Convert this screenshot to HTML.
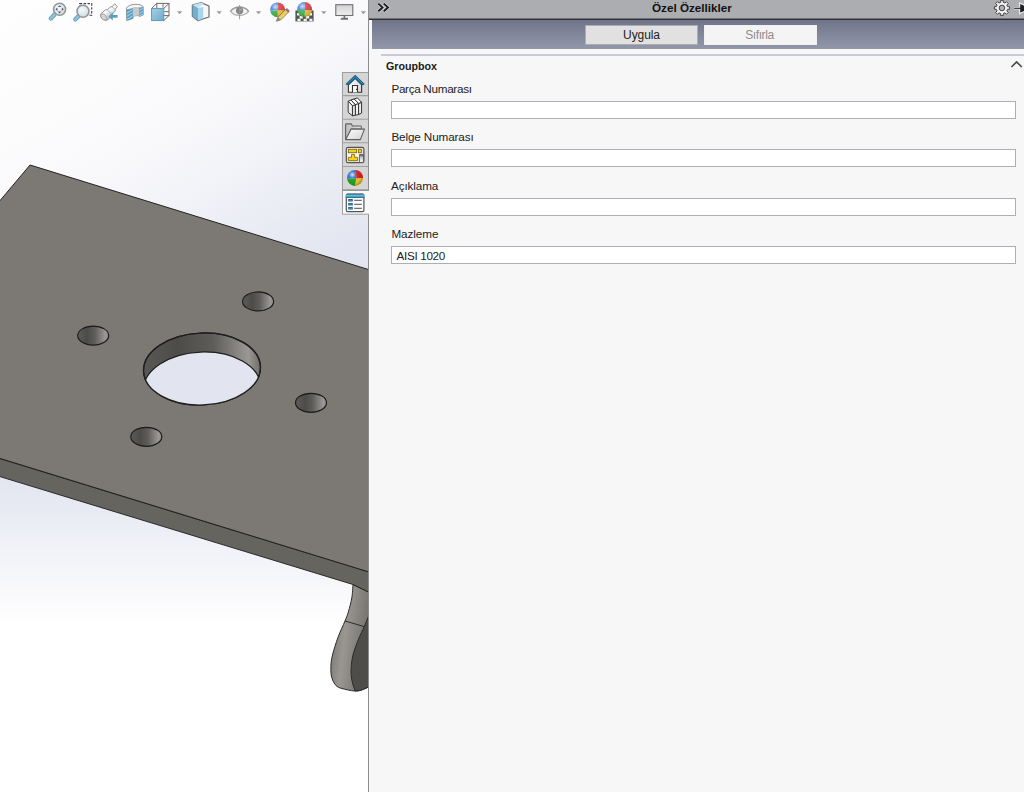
<!DOCTYPE html>
<html>
<head>
<meta charset="utf-8">
<title>Özel Özellikler</title>
<style>
html,body{margin:0;padding:0;}
body{width:1024px;height:792px;overflow:hidden;position:relative;background:#fff;font-family:"Liberation Sans",sans-serif;}
#vp{position:absolute;left:0;top:0;width:368px;height:792px;overflow:hidden;
  background:
    linear-gradient(to bottom, rgba(255,255,255,0) 0px, rgba(255,255,255,0) 465px, #e1e4f0 465px, #e4e7f1 485px, #e8eaf3 510px, #eff1f7 540px, #f5f6fa 573px, #fafafc 598px, #ffffff 625px, #ffffff 792px),
    linear-gradient(150deg, #fefefe 0px, #fcfcfd 130px, #f8f8fb 210px, #f2f3f8 265px, #e8eaf3 340px, #e4e7f1 380px, #e2e5f0 410px, #dfe3ef 500px, #dde1ee 600px);
}
#vp svg{position:absolute;left:0;top:0;}
#panel{position:absolute;left:368px;top:0;width:656px;height:792px;background:#f7f7f7;border-left:1px solid #8d8d8d;box-sizing:border-box;}
#titlebar{position:absolute;left:0;top:0;width:655px;height:18px;background:#acadb0;}
#titleline{position:absolute;left:0;top:18px;width:655px;height:2px;background:linear-gradient(to bottom,#717278 0,#717278 1px,#2e3038 1px,#2e3038 2px);}
#title{position:absolute;left:0;top:0;width:655px;box-sizing:border-box;padding-right:9.2px;height:18px;line-height:16px;text-align:center;font-weight:bold;font-size:11.7px;color:#111;}
#gbar{position:absolute;left:3px;top:20px;width:652px;height:29px;background:linear-gradient(to bottom,#70748a 0,#9298aa 100%);}
.btn{position:absolute;top:25px;height:20px;box-sizing:border-box;font-size:12px;line-height:19px;text-align:center;}
#b1{left:216px;width:113px;background:#e1e1e1;border:1px solid #adadad;color:#222;letter-spacing:-0.1px;}
#b2{left:335px;width:113px;padding-right:2px;background:#f4f4f4;border:1px solid #f0f0f0;color:#8e8e8e;letter-spacing:-0.4px;}
#sep{position:absolute;left:12px;top:54px;width:643px;height:2px;background:#c6cadb;}
#gb{position:absolute;left:17px;top:60px;font-size:10.7px;font-weight:bold;color:#1a1a1a;line-height:13px;}
.lbl{position:absolute;left:22.4px;font-size:11.7px;letter-spacing:-0.3px;color:#222;line-height:14px;white-space:nowrap;}
.inp{position:absolute;left:22px;width:625px;height:18px;box-sizing:border-box;border:1px solid #adafb7;background:#fff;font-size:11.7px;letter-spacing:-0.33px;line-height:16px;padding-top:1px;padding-left:4.6px;color:#222;}
.tab{position:absolute;left:342px;width:26px;height:24px;box-sizing:border-box;background:#d4d4d4;border:1px solid #a2a2a2;border-right:none;}
</style>
</head>
<body>
<div id="vp">
<svg id="scene" width="368" height="792" viewBox="0 0 368 792">
<defs>
  <linearGradient id="hg" x1="0" y1="0" x2="1" y2="0">
    <stop offset="0" stop-color="#5e5c59"/>
    <stop offset="0.3" stop-color="#4d4b48"/>
    <stop offset="0.55" stop-color="#5f5d5a"/>
    <stop offset="0.9" stop-color="#9b9895"/>
    <stop offset="1" stop-color="#8a8784"/>
  </linearGradient>
  <linearGradient id="wg" x1="0" y1="0" x2="1" y2="0">
    <stop offset="0" stop-color="#5a5855"/>
    <stop offset="0.3" stop-color="#4e4c49"/>
    <stop offset="0.6" stop-color="#5e5c59"/>
    <stop offset="0.9" stop-color="#9a9794"/>
    <stop offset="1" stop-color="#6f6d69"/>
  </linearGradient>
  <linearGradient id="lg" x1="0" y1="0" x2="1" y2="0.3">
    <stop offset="0" stop-color="#6e6c68"/>
    <stop offset="0.45" stop-color="#9a9793"/>
    <stop offset="1" stop-color="#73716d"/>
  </linearGradient>
  <clipPath id="cpTop"><ellipse cx="202" cy="369" rx="58.5" ry="36" transform="rotate(-2.3 202 369)"/></clipPath>
</defs>
<!-- leg -->
<path d="M353.0,584.5 C352.8,586.8 352.6,593.5 351.8,598.0 C351.0,602.5 349.5,608.0 348.4,611.8 C347.3,615.6 346.7,616.8 345.0,621.0 C343.3,625.2 340.3,631.1 338.2,636.8 C336.1,642.5 333.7,650.1 332.5,655.0 C331.3,659.9 331.0,662.6 330.9,666.4 C330.8,670.2 330.8,674.4 331.8,677.7 C332.8,681.0 334.4,684.4 337.0,686.4 C339.6,688.4 344.3,689.0 347.3,689.8 C350.3,690.6 352.9,690.9 355.2,691.0 C357.5,691.1 358.5,691.0 361.0,690.2 C363.5,689.4 368.5,687.0 370.0,686.4 L370,592.5 Z" fill="url(#lg)" stroke="#2a2a2a" stroke-width="1"/>
<path d="M370.0,614.0 C369.7,614.6 368.9,615.4 368.0,617.5 C367.1,619.6 365.9,623.0 364.3,626.6 C362.7,630.2 360.5,634.3 358.6,639.0 C356.7,643.7 354.2,650.1 353.0,655.0 C351.8,659.9 351.3,664.4 351.1,668.6 C350.9,672.8 351.1,676.3 351.8,680.0 C352.5,683.7 354.6,689.2 355.2,691.0 L361,690.2 L370,686.4 Z" fill="#4f4d4a" stroke="#2a2a2a" stroke-width="1"/>
<path d="M345,621 L364.3,626.6" stroke="#2a2a2a" stroke-width="1" fill="none"/>
<!-- side face -->
<path d="M-2,458 L370,572.3 L370,592.8 L353,584.5 L-2,476 Z" fill="#66645f" stroke="#222" stroke-width="0.95"/>
<!-- top face -->
<path d="M-2,203 L30,165 L370,270 L370,572.3 L-2,457.8 Z" fill="#7c7974" stroke="#222" stroke-width="1" stroke-linejoin="miter"/>
<!-- center hole -->
<ellipse cx="202" cy="369" rx="58.5" ry="36" transform="rotate(-2.3 202 369)" fill="url(#wg)" stroke="#1f1f1f" stroke-width="1.3"/>
<g clip-path="url(#cpTop)">
  <ellipse cx="202" cy="388" rx="58.5" ry="36" transform="rotate(-2.3 202 388)" fill="#e2e5ef" stroke="#1f1f1f" stroke-width="1.2"/>
</g>
<ellipse cx="202" cy="369" rx="58.5" ry="36" transform="rotate(-2.3 202 369)" fill="none" stroke="#1f1f1f" stroke-width="1.3"/>
<!-- small holes -->
<ellipse cx="258.1" cy="301.4" rx="15.5" ry="9.5" fill="url(#hg)" stroke="#1c1c1c" stroke-width="1.15"/>
<ellipse cx="93.2" cy="335.6" rx="15.5" ry="9.5" fill="url(#hg)" stroke="#1c1c1c" stroke-width="1.15"/>
<ellipse cx="311" cy="402.8" rx="15.5" ry="9.5" fill="url(#hg)" stroke="#1c1c1c" stroke-width="1.15"/>
<ellipse cx="146.3" cy="436.8" rx="15.5" ry="9.5" fill="url(#hg)" stroke="#1c1c1c" stroke-width="1.15"/>
</svg>

<svg id="tb" width="368" height="26" viewBox="0 0 368 26" style="position:absolute;left:0;top:0">
<defs>
  <radialGradient id="glass" cx="0.4" cy="0.35" r="0.7">
    <stop offset="0" stop-color="#f6f9fa"/><stop offset="1" stop-color="#cddae1"/>
  </radialGradient>
  <linearGradient id="blu" x1="0" y1="0" x2="1" y2="1">
    <stop offset="0" stop-color="#a6d0e6"/><stop offset="1" stop-color="#6fa9c8"/>
  </linearGradient>
  <linearGradient id="scr" x1="0" y1="0" x2="0" y2="1">
    <stop offset="0" stop-color="#d2d2d2"/><stop offset="1" stop-color="#efefef"/>
  </linearGradient>
  <linearGradient id="tel" x1="0" y1="0" x2="0.6" y2="1">
    <stop offset="0" stop-color="#bdbdbd"/><stop offset="0.5" stop-color="#fafafa"/><stop offset="1" stop-color="#a8a8a8"/>
  </linearGradient>
  <radialGradient id="shine" cx="0.35" cy="0.3" r="0.75">
    <stop offset="0" stop-color="#ffffff" stop-opacity="0.75"/><stop offset="0.35" stop-color="#ffffff" stop-opacity="0.1"/><stop offset="1" stop-color="#000000" stop-opacity="0.18"/>
  </radialGradient>
  <clipPath id="bc1"><circle cx="277.6" cy="9.8" r="7.4"/></clipPath>
  <clipPath id="bc2"><circle cx="304.6" cy="9.4" r="7.4"/></clipPath>
</defs>
<!-- 1 zoom to fit -->
<line x1="54.6" y1="14.4" x2="50.8" y2="18.4" stroke="#6a9fbd" stroke-width="4.4" stroke-linecap="round"/>
<line x1="54.6" y1="14.4" x2="50.8" y2="18.4" stroke="#8fc2db" stroke-width="2.6" stroke-linecap="round"/>
<circle cx="59.6" cy="9.3" r="6" fill="url(#glass)" stroke="#93979a" stroke-width="1.6"/>
<path d="M59.6,5.2 l1.7,1.9 h-3.4z M59.6,13.4 l1.7,-1.9 h-3.4z M55.5,9.3 l1.9,-1.7 v3.4z M63.7,9.3 l-1.9,-1.7 v3.4z" fill="#56595b"/>
<!-- 2 zoom area -->
<rect x="79.7" y="3.6" width="12" height="11.6" fill="none" stroke="#3a3a3a" stroke-width="1.1" stroke-dasharray="2.4 1.5"/>
<line x1="78.4" y1="16.2" x2="75.4" y2="19.3" stroke="#6a9fbd" stroke-width="4.4" stroke-linecap="round"/>
<line x1="78.4" y1="16.2" x2="75.4" y2="19.3" stroke="#8fc2db" stroke-width="2.6" stroke-linecap="round"/>
<circle cx="83" cy="11.2" r="6" fill="url(#glass)" stroke="#93979a" stroke-width="1.6"/>
<!-- 3 previous view -->
<path d="M100.4,14.4 L105.6,9.6 L107.2,9.8 L110.8,6.6 L112,6.8 L114.6,3.8 L117.4,6.4 L115.2,9.6 L115.4,10.8 L112,14.4 L112,16 L107,20.2 C103.8,20.8 100,17.8 100.4,14.4Z" fill="url(#tel)" stroke="#8e8e8e" stroke-width="0.9" stroke-linejoin="round"/>
<path d="M107.2,9.8 L112,14.4 M112,6.8 L115.2,9.6" stroke="#a0a0a0" stroke-width="0.8" fill="none"/>
<ellipse cx="103.6" cy="17" rx="2.3" ry="3.4" transform="rotate(-40 103.6 17)" fill="#e6e6e6" stroke="#8e8e8e" stroke-width="0.8"/>
<ellipse cx="103.6" cy="17" rx="1.1" ry="2" transform="rotate(-40 103.6 17)" fill="#cfcfcf"/>
<path d="M108.4,16.4 L112.8,12.4 L112.8,15 L117.6,15 L117.6,17.8 L112.8,17.8 L112.8,20.4Z" fill="#5b9fc0"/>
<!-- 4 section view -->
<path d="M126.4,8.4 C128,3.4 142,3 143.2,7 L143.2,15 L139,16.6 L139,15.4 L133,16 L133,18.4 L126.8,20.6Z" fill="#f4f4f4" stroke="#8a8a8a" stroke-width="0.9"/>
<path d="M126.6,9.6 L133,8 L133,18.4 L126.8,20.6Z" fill="#5f9fc2"/>
<path d="M127,13 l5.6,-3.4 M127,16.2 l5.6,-3.4 M127,19.4 l5.6,-3.4" stroke="#b5d9ea" stroke-width="1"/>
<path d="M139,7.4 L143.2,7 L143.2,15 L139,16.6Z" fill="#5f9fc2"/>
<path d="M139.2,10.4 l3.8,-2 M139.2,13.4 l3.8,-2 M139.2,16 l3.8,-2" stroke="#b5d9ea" stroke-width="0.9"/>
<path d="M133,7 L139,7 L139,15.4 L133,16Z" fill="#c9c9c9"/>
<!-- 5 view orientation -->
<rect x="156.8" y="3.4" width="12.2" height="12.2" fill="#fbfbfb" stroke="#6b6b6b" stroke-width="1"/>
<path d="M151.6,8.4 L156.8,3.4 M163.8,8.4 L169,3.4 M163.8,20.4 L169,15.6 M163,3.6 v4 M164.4,11.6 h4.4" stroke="#5d5d5d" stroke-width="0.9" fill="none"/>
<rect x="151.6" y="8.4" width="12.2" height="12.2" fill="url(#blu)" stroke="#5d93b1" stroke-width="0.9"/>
<path d="M177,11.2 h5.2 l-2.6,3z" fill="#9b9b9b"/>
<!-- 6 display style -->
<path d="M192.4,5 L201.2,2.6 L209,6 L209,17 L197.8,20.6 L192.4,16.4Z" fill="#f6f6f6" stroke="#6c6c6c" stroke-width="1.2" stroke-linejoin="round"/>
<path d="M192.4,5 L197.8,8 L197.8,20.6 L192.4,16.4Z" fill="#72aed0" stroke="#6a8798" stroke-width="0.7"/>
<path d="M197.8,8 L203.2,7 L203.2,18.8 L197.8,20.6Z" fill="#a9d4ea"/>
<path d="M192.4,5 L201.2,2.6 L204,3.8 L197.8,8Z" fill="#c2e1f1"/>
<path d="M216.6,11.2 h5.2 l-2.6,3z" fill="#9b9b9b"/>
<!-- 7 hide/show eye -->
<path d="M230.6,11.4 C234,5.6 245,5.6 248.6,11.4 C245,16.6 234,16.6 230.6,11.4Z" fill="#f1f1f1" stroke="#b2b2b2" stroke-width="1.2"/><path d="M230.6,11.4 C234,5.6 245,5.6 248.6,11.4" fill="none" stroke="#9c9c9c" stroke-width="1.2"/>
<circle cx="239.6" cy="10.6" r="3.6" fill="#858585"/>
<circle cx="240.6" cy="9.6" r="1.2" fill="#a9a9a9"/>
<line x1="239.6" y1="5" x2="239.6" y2="19.2" stroke="#9a9a9a" stroke-width="1"/>
<path d="M256,11.2 h5.2 l-2.6,3z" fill="#9b9b9b"/>
<!-- 8 edit appearance -->
<g clip-path="url(#bc1)">
  <rect x="270" y="2" width="7.8" height="8.6" fill="#4a86dd"/>
  <rect x="277.8" y="2" width="8" height="8.6" fill="#d8434b"/>
  <rect x="270" y="10.6" width="7.8" height="8" fill="#3db64c"/>
  <rect x="277.8" y="10.6" width="8" height="8" fill="#efc63a"/>
  <circle cx="277.6" cy="9.8" r="7.4" fill="url(#shine)"/>
</g>
<path d="M276.4,21.2 L278,17.2 L285.6,9.6 L288.6,12 L280.8,19.8Z" fill="#f3cf55" stroke="#6c6c6c" stroke-width="0.8"/>
<path d="M285.6,9.6 L287,8.6 L289.4,10.8 L288.6,12Z" fill="#d8534f" stroke="#6c6c6c" stroke-width="0.6"/>
<path d="M276.4,21.2 L278,17.2 L280.8,19.8Z" fill="#8a8a8a"/>
<!-- 9 apply scene -->
<rect x="295.4" y="10.4" width="18.2" height="11" fill="#555555"/>
<path d="M297,13 h3v2.6h-3z M303,13 h3v2.6h-3z M309,13 h3v2.6h-3z M299.6,16 h3.2v2.4h-3.2z M306,16 h3.2v2.4h-3.2z M297.4,18.8 h3.2v2.2h-3.2z M303.6,18.8 h3.2v2.2h-3.2z M309.4,18.8 h3v2.2h-3z" fill="#f2f2f2"/>
<g clip-path="url(#bc2)">
  <rect x="297" y="1.6" width="7.8" height="8.6" fill="#4a86dd"/>
  <rect x="304.8" y="1.6" width="8" height="8.6" fill="#d8434b"/>
  <rect x="297" y="10.2" width="7.8" height="8" fill="#3db64c"/>
  <rect x="304.8" y="10.2" width="8" height="8" fill="#efc63a"/>
  <circle cx="304.6" cy="9.4" r="7.4" fill="url(#shine)"/>
</g>
<path d="M321.2,11.2 h5.2 l-2.6,3z" fill="#9b9b9b"/>
<!-- 10 view settings monitor -->
<rect x="335.8" y="4.7" width="17" height="10.8" fill="url(#scr)" stroke="#6f6f6f" stroke-width="1.1"/>
<rect x="343.6" y="16" width="1.6" height="2.2" fill="#6f6f6f"/>
<path d="M341.6,17.8 h6.4 v2 h-7.8z" fill="#6f6f6f"/>
<path d="M360.8,11.2 h5.2 l-2.6,3z" fill="#9b9b9b"/>
</svg>
</div>
<div id="panel">
  <div id="titlebar"></div>
  <div id="titleline"></div>
  <div id="title">Özel Özellikler</div>
  <div id="gbar"></div>
  <svg id="picons" width="655" height="72" viewBox="0 0 655 72" style="position:absolute;left:0;top:0">
    <path d="M9.3,3.6 L13.5,7.4 L9.3,11.2 M14.8,3.6 L19,7.4 L14.8,11.2" fill="none" stroke="#fff" stroke-opacity="0.55" stroke-width="3.2"/>
    <path d="M9.3,3.6 L13.5,7.4 L9.3,11.2 M14.8,3.6 L19,7.4 L14.8,11.2" fill="none" stroke="#1a1a1a" stroke-width="1.9"/>
    <path d="M631.59,2.44 L631.70,0.37 L634.22,0.37 L634.33,2.44 L635.90,3.09 L637.44,1.71 L639.22,3.49 L637.84,5.03 L638.49,6.60 L640.56,6.71 L640.56,9.23 L638.49,9.34 L637.84,10.91 L639.22,12.45 L637.44,14.23 L635.90,12.85 L634.33,13.50 L634.22,15.57 L631.70,15.57 L631.59,13.50 L630.02,12.85 L628.48,14.23 L626.70,12.45 L628.08,10.91 L627.43,9.34 L625.36,9.23 L625.36,6.71 L627.43,6.60 L628.08,5.03 L626.70,3.49 L628.48,1.71 L630.02,3.09Z" fill="#f3f3f3" stroke="#444" stroke-width="1" stroke-linejoin="round"/>
    <circle cx="632.96" cy="7.97" r="2.8" fill="#b0b0b4" stroke="#444" stroke-width="1"/>
    <path d="M645,8.3 H652 M651.2,4 V12.6 L655,10.6 V5.6Z" fill="none" stroke="#fff" stroke-opacity="0.7" stroke-width="2.6"/>
    <path d="M645.2,8.3 H652" stroke="#222" stroke-width="1.1"/>
    <path d="M651.2,4 L656,6.2 V10.6 L651.2,12.6Z" fill="#1e1e1e"/>
    <path d="M642.4,67 L647.6,62 L652.8,67" fill="none" stroke="#4a4a4a" stroke-width="1.7"/>
  </svg>

  <div class="btn" id="b1">Uygula</div>
  <div class="btn" id="b2">Sıfırla</div>
  <div id="sep"></div>
  <div id="gb">Groupbox</div>
  <div class="lbl" style="top:82px">Parça Numarası</div>
  <div class="inp" style="top:101px"></div>
  <div class="lbl" style="top:130px;letter-spacing:-0.12px">Belge Numarası</div>
  <div class="inp" style="top:149px"></div>
  <div class="lbl" style="top:179px;left:22px;letter-spacing:-0.1px">Açıklama</div>
  <div class="inp" style="top:198px"></div>
  <div class="lbl" style="top:227px;letter-spacing:-0.07px">Mazleme</div>
  <div class="inp" style="top:246px">AISI 1020</div>
</div>

<svg id="tabs" width="29" height="150" viewBox="340 70 29 150" style="position:absolute;left:340px;top:70px">
<defs>
  <linearGradient id="wh" x1="0" y1="0" x2="1" y2="0">
    <stop offset="0" stop-color="#ffffff"/><stop offset="1" stop-color="#d9d9d9"/>
  </linearGradient>
  <linearGradient id="whv" x1="0" y1="0" x2="0" y2="1">
    <stop offset="0" stop-color="#e6e6e6"/><stop offset="1" stop-color="#ffffff"/>
  </linearGradient>
  <linearGradient id="fold" x1="0" y1="0" x2="1" y2="1">
    <stop offset="0" stop-color="#ffffff"/><stop offset="1" stop-color="#d2d2d2"/>
  </linearGradient>
  <linearGradient id="foldb" x1="0" y1="0" x2="1" y2="0">
    <stop offset="0" stop-color="#bdbdbd"/><stop offset="1" stop-color="#e2e2e2"/>
  </linearGradient>
  <linearGradient id="hdr" x1="0" y1="0" x2="0" y2="1">
    <stop offset="0" stop-color="#1d6287"/><stop offset="0.45" stop-color="#74bfe2"/><stop offset="1" stop-color="#1d6287"/>
  </linearGradient>
  <linearGradient id="gr" x1="0" y1="0" x2="0" y2="1">
    <stop offset="0" stop-color="#555"/><stop offset="0.4" stop-color="#d0d0d0"/><stop offset="1" stop-color="#f4f4f4"/>
  </linearGradient>
  <radialGradient id="shine2" cx="0.33" cy="0.3" r="0.8">
    <stop offset="0" stop-color="#ffffff" stop-opacity="0.85"/><stop offset="0.25" stop-color="#ffffff" stop-opacity="0.12"/><stop offset="0.7" stop-color="#000000" stop-opacity="0.05"/><stop offset="1" stop-color="#000000" stop-opacity="0.4"/>
  </radialGradient>
  <clipPath id="bc3"><circle cx="355.05" cy="177.95" r="8"/></clipPath>
</defs>
<rect x="342.5" y="72.5" width="27" height="117.7" fill="#d5d5d5" stroke="#9e9e9e" stroke-width="1"/>
<rect x="342.5" y="190.2" width="28" height="24" fill="#f9f9f9" stroke="#a2a2a2" stroke-width="1"/>
<path d="M342.5,95.6 h26 M342.5,119.2 h26 M342.5,142.8 h26 M342.5,166.5 h26" stroke="#a0a0a0" stroke-width="1.1"/>
<path d="M342,190.2 h27" stroke="#8e8e8e" stroke-width="1.2"/>
<path d="M368.5,72 V190.6" stroke="#8e8e8e" stroke-width="1"/>
<!-- home -->
<path d="M348.4,92.3 V84.6 L355.15,78.2 L361.6,84.6 V92.3Z" fill="url(#wh)"/><path d="M348.4,85 V92.3 H361.6 V85" fill="none" stroke="#333" stroke-width="1.1"/>
<path d="M352.5,92.3 V85.5 H357.5 V92.3" fill="#fafafa" stroke="#333" stroke-width="1.1"/>
<rect x="356" y="88.7" width="1.2" height="1.2" fill="#333"/>
<path d="M355.15,74.8 L364.5,83.8 L364,85 L361,85 L355.15,79.3 L349.3,85 L346.3,85 L345.8,83.8 Z" fill="#195a7c"/>
<path d="M347.6,83.8 L355.15,76.6 L362.7,83.8" fill="none" stroke="#4595bd" stroke-width="1"/>
<!-- books -->
<path d="M348.2,101.2 L352.6,105.7 L352.6,115.9 L348.2,112.4Z" fill="url(#wh)" stroke="#333" stroke-width="1" stroke-linejoin="round"/>
<path d="M352.6,105.7 L355.4,104.6 L355.4,115.2 L352.6,115.9Z" fill="#f2f2f2" stroke="#333" stroke-width="1" stroke-linejoin="round"/>
<path d="M355.4,104.6 L358.6,103.4 L358.6,114.5 L355.4,115.2Z" fill="#f2f2f2" stroke="#333" stroke-width="1" stroke-linejoin="round"/>
<path d="M358.6,103.4 L361.6,102.3 L361.6,113.1 L358.6,114.5Z" fill="#ececec" stroke="#333" stroke-width="1" stroke-linejoin="round"/>
<path d="M348.2,101.2 L351,100 L355.4,104.6 L352.6,105.7Z" fill="#fff" stroke="#333" stroke-width="1" stroke-linejoin="round"/>
<path d="M351,100 L354.2,98.9 L358.6,103.4 L355.4,104.6Z" fill="#fff" stroke="#333" stroke-width="1" stroke-linejoin="round"/>
<path d="M354.2,98.9 L357.4,97.9 L361.6,102.3 L358.6,103.4Z" fill="#fff" stroke="#333" stroke-width="1" stroke-linejoin="round"/>
<!-- folder -->
<path d="M345.6,139.6 V124.8 Q345.6,123.9 346.5,123.9 H350.8 Q351.5,123.9 351.8,124.6 L352.3,126 H360.6 Q361.3,126 361.3,126.8 V129 H351.2 L346.6,139" fill="url(#foldb)" stroke="#606060" stroke-width="1.1" stroke-linejoin="round"/>
<path d="M345.7,139.6 L351.2,129.1 H364.5 L360.4,139.6 Z" fill="url(#fold)" stroke="#606060" stroke-width="1.1" stroke-linejoin="round"/>
<!-- dimxpert -->
<rect x="346.3" y="147.4" width="17.6" height="15.3" rx="1.8" fill="#e6e6e6" stroke="#555" stroke-width="1.2"/>
<rect x="347.6" y="153.6" width="11" height="4" fill="#f8f8f8"/>
<rect x="348.4" y="149.3" width="8.2" height="3.4" fill="#f6d21f" stroke="#7d6500" stroke-width="0.8"/>
<rect x="358.5" y="149.3" width="3" height="3.4" fill="#f6d21f" stroke="#7d6500" stroke-width="0.8"/>
<path d="M351.5,154.5 h3.1 v2.8 h3 v3.3 h-9.2 v-3.3 h3.1z" fill="#f6d21f" stroke="#7d6500" stroke-width="0.8"/>
<rect x="359.6" y="154.6" width="3.8" height="7.8" fill="url(#gr)" stroke="#555" stroke-width="0.8"/>
<!-- ball -->
<g clip-path="url(#bc3)">
  <path d="M346,169 H354.2 Q357,174 356.1,178.4 L346,178.8Z" fill="#2f6fd2"/>
  <path d="M354.2,169 H364 V178 L356.1,178.4 Q357,174 354.2,169Z" fill="#d61f1f"/>
  <path d="M346,178.8 L356.1,178.4 Q355.8,183 354.8,187 H346Z" fill="#1ea51e"/>
  <path d="M356.1,178.4 L364,178 V187 H354.8 Q355.8,183 356.1,178.4Z" fill="#efc52f"/>
  <circle cx="355.05" cy="177.95" r="8" fill="url(#shine2)"/>
</g>
<!-- property list -->
<rect x="346.3" y="194.2" width="17.6" height="17.5" rx="1.4" fill="#fbfbfb" stroke="#555" stroke-width="1.2"/>
<path d="M345.9,198 V195.2 Q345.9,193.8 347.3,193.8 H362.9 Q364.3,193.8 364.3,195.2 V198Z" fill="url(#hdr)"/>
<rect x="348.2" y="199.1" width="4.6" height="2.5" rx="0.5" fill="#1d6287"/>
<rect x="348.2" y="203.1" width="4.6" height="2.5" rx="0.5" fill="#1d6287"/>
<rect x="348.2" y="207.1" width="4.6" height="2.5" rx="0.5" fill="#1d6287"/>
<path d="M349,200.4 h3 M349,204.4 h3 M349,208.4 h3" stroke="#4a93b8" stroke-width="0.9"/>
<path d="M354.2,200.4 h7.6 M354.2,204.4 h7.6 M354.2,208.4 h7.6" stroke="#707070" stroke-width="1.3"/>
</svg>
</body>
</html>
